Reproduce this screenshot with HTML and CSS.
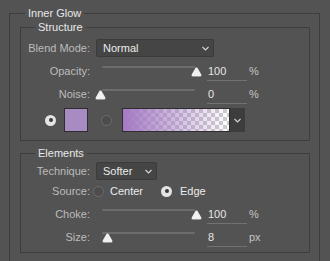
FILE: index.html
```html
<!DOCTYPE html>
<html lang="en">

<head>
    <meta charset="UTF-8">
    <meta name="viewport" content="width=device-width, initial-scale=1.0">
    <title>Inner Glow</title>
    <link rel="stylesheet" href="styles.css">
</head>

<body>
    <fieldset class="panel">
        <legend>Inner Glow</legend>

        <!-- Structure -->
        <fieldset class="group group-structure">
            <legend>Structure</legend>

            <div class="row">
                <span class="label">Blend Mode:</span>
                <div class="select select-blend">
                    <span>Normal</span>
                    <svg class="chevron" width="7" height="5" viewBox="0 0 7 5"><path d="M0.5 1 L3.5 4 L6.5 1" /></svg>
                </div>
            </div>

            <div class="row row-tall">
                <span class="label">Opacity:</span>
                <div class="slider">
                    <div class="track"></div>
                    <svg class="thumb" style="left: 96px" width="11" height="10" viewBox="0 0 11 10"><path d="M5.5 0.3 C6.4 0.3 6.9 1 7.4 1.9 L10.4 7.2 C10.9 8.2 10.5 9.7 9.2 9.7 L1.8 9.7 C0.5 9.7 0.1 8.2 0.6 7.2 L3.6 1.9 C4.1 1 4.6 0.3 5.5 0.3 Z" /></svg>
                </div>
                <span class="value">100</span>
                <span class="unit">%</span>
            </div>

            <div class="row">
                <span class="label">Noise:</span>
                <div class="slider">
                    <div class="track"></div>
                    <svg class="thumb" style="left: 0px" width="11" height="10" viewBox="0 0 11 10"><path d="M5.5 0.3 C6.4 0.3 6.9 1 7.4 1.9 L10.4 7.2 C10.9 8.2 10.5 9.7 9.2 9.7 L1.8 9.7 C0.5 9.7 0.1 8.2 0.6 7.2 L3.6 1.9 C4.1 1 4.6 0.3 5.5 0.3 Z" /></svg>
                </div>
                <span class="value">0</span>
                <span class="unit">%</span>
            </div>

            <div class="row row-color">
                <span class="radio radio-on"></span>
                <div class="swatch"></div>
                <span class="radio radio-off"></span>
                <div class="gradient-picker">
                    <div class="gradient"></div>
                    <div class="gradient-btn">
                        <svg class="chevron" width="7" height="5" viewBox="0 0 7 5"><path d="M0.5 1 L3.5 4 L6.5 1" /></svg>
                    </div>
                </div>
            </div>
        </fieldset>

        <!-- Elements -->
        <fieldset class="group group-elements">
            <legend>Elements</legend>

            <div class="row">
                <span class="label">Technique:</span>
                <div class="select select-technique">
                    <span>Softer</span>
                    <svg class="chevron" width="7" height="5" viewBox="0 0 7 5"><path d="M0.5 1 L3.5 4 L6.5 1" /></svg>
                </div>
            </div>

            <div class="row">
                <span class="label">Source:</span>
                <div class="radios">
                    <span class="radio radio-off"></span>
                    <span class="option">Center</span>
                    <span class="radio radio-on"></span>
                    <span class="option">Edge</span>
                </div>
            </div>

            <div class="row row-tall">
                <span class="label">Choke:</span>
                <div class="slider">
                    <div class="track"></div>
                    <svg class="thumb" style="left: 96px" width="11" height="10" viewBox="0 0 11 10"><path d="M5.5 0.3 C6.4 0.3 6.9 1 7.4 1.9 L10.4 7.2 C10.9 8.2 10.5 9.7 9.2 9.7 L1.8 9.7 C0.5 9.7 0.1 8.2 0.6 7.2 L3.6 1.9 C4.1 1 4.6 0.3 5.5 0.3 Z" /></svg>
                </div>
                <span class="value">100</span>
                <span class="unit">%</span>
            </div>

            <div class="row">
                <span class="label">Size:</span>
                <div class="slider">
                    <div class="track"></div>
                    <svg class="thumb" style="left: 7px" width="11" height="10" viewBox="0 0 11 10"><path d="M5.5 0.3 C6.4 0.3 6.9 1 7.4 1.9 L10.4 7.2 C10.9 8.2 10.5 9.7 9.2 9.7 L1.8 9.7 C0.5 9.7 0.1 8.2 0.6 7.2 L3.6 1.9 C4.1 1 4.6 0.3 5.5 0.3 Z" /></svg>
                </div>
                <span class="value">8</span>
                <span class="unit">px</span>
            </div>
        </fieldset>
    </fieldset>
</body>

</html>
```

FILE: styles.css
```css
html,
body {
    margin: 0;
    padding: 0;
    overflow: hidden;
}

body {
    background-color: #535353;
    font-family: 'Liberation Sans', Arial, sans-serif;
    font-size: 11px;
    color: #bcbcbc;
}

fieldset {
    margin: 0;
    min-width: 0;
    border: 1px solid #3d3d3d;
    box-sizing: border-box;
}

legend {
    padding: 0 3px;
    line-height: 13px;
    color: #e8e8e8;
}

.panel {
    margin: 7px 0 0 9px;
    width: 311px;
    padding: 1px 9px 20px 10px;
}

.panel > legend {
    margin-left: 5px;
}

.group {
    padding: 4px 0 4px 0;
}

.group > legend {
    margin-left: 14px;
}

.group-elements {
    margin-top: 6px;
    padding: 1px 0 5px 0;
}

/* rows */
.row {
    display: flex;
    align-items: center;
    height: 20px;
}

.row-tall {
    height: 26px;
}

.label {
    flex: 0 0 69px;
    text-align: right;
}

/* dropdowns */
.select {
    display: flex;
    align-items: center;
    justify-content: space-between;
    box-sizing: border-box;
    height: 18px;
    margin-left: 6px;
    padding: 0 4px 0 6px;
    background-color: #454545;
    border: 1px solid #3b3b3b;
    border-radius: 2px;
    color: #ececec;
}

.select-blend {
    width: 118px;
}

.select-technique {
    width: 61px;
}

.chevron path {
    fill: none;
    stroke: #d6d6d6;
    stroke-width: 1.1;
}

/* sliders */
.slider {
    position: relative;
    flex: 0 0 107px;
    height: 12px;
    margin-left: 5px;
}

.track {
    position: absolute;
    top: 1px;
    left: 7px;
    width: 93px;
    height: 2px;
    border-radius: 1px;
    background-color: #6c6c6c;
}

.thumb {
    position: absolute;
    top: 2px;
}

.thumb path {
    fill: #f0f0f0;
    stroke: #3a3a3a;
    stroke-width: 0.4;
}

.value {
    box-sizing: border-box;
    width: 40px;
    height: 19px;
    line-height: 18px;
    margin-left: 5px;
    padding-left: 1px;
    border-bottom: 1px solid #727272;
    color: #e6e6e6;
}

.unit {
    margin-left: 2px;
    color: #c4c4c4;
}

/* radios */
.radio {
    position: relative;
    flex: 0 0 auto;
    box-sizing: border-box;
    width: 11px;
    height: 11px;
    border-radius: 50%;
}

.radio-on {
    background-color: #e4e4e4;
}

.radio-on::after {
    content: "";
    position: absolute;
    top: 3.5px;
    left: 3.5px;
    width: 4px;
    height: 4px;
    border-radius: 50%;
    background-color: #3a3a3a;
}

.radio-off {
    background-color: #4c4c4c;
    border: 1px solid #6c6c6c;
}

.radios {
    display: flex;
    align-items: center;
    margin-left: 3px;
}

.option {
    margin-left: 6px;
    margin-right: 18px;
    color: #ececec;
}

.radios .radio-on + .option {
    margin-left: 8px;
}

/* colour row */
.row-color {
    height: 32px;
    padding-left: 24px;
}

.swatch {
    box-sizing: border-box;
    width: 24px;
    height: 24px;
    margin: 0 13px 0 8px;
    background-color: #a88bc0;
    border: 1px solid #2e2e2e;
}

.gradient-picker {
    display: flex;
    margin-left: 10px;
    height: 24px;
}

.gradient {
    box-sizing: border-box;
    width: 108px;
    border: 1px solid #2e2e2e;
    background-image:
        linear-gradient(to right, rgba(164, 122, 196, 1), rgba(164, 122, 196, 0)),
        repeating-conic-gradient(#cdcdcd 0 25%, #ffffff 0 50%);
    background-size: 100% 100%, 8px 8px;
}

.gradient-btn {
    display: flex;
    align-items: center;
    justify-content: center;
    width: 15px;
    background-color: #3d3d3d;
}
```
